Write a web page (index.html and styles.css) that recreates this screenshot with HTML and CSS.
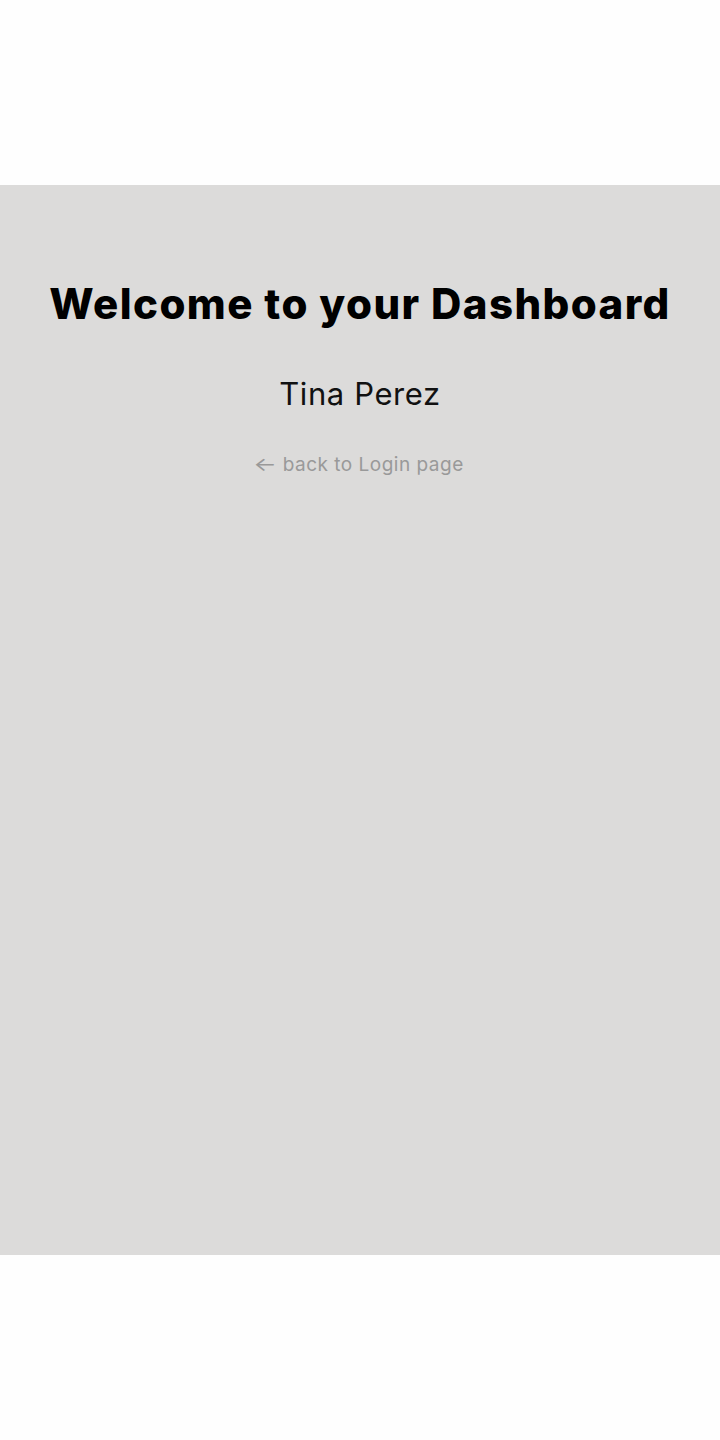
FILE: index.html
```html
<!DOCTYPE html>
<html lang="en">
<head>
<meta charset="utf-8">
<title>Dashboard</title>
<link rel="stylesheet" href="styles.css">
</head>
<body>
<div class="page">
  <main class="dashboard">
    <h1 class="title">Welcome to your Dashboard</h1>
    <p class="user-name">Tina Perez</p>
    <a class="back-link" href="#"><span class="arrow">&larr;</span> back to Login page</a>
  </main>
</div>
</body>
</html>
```
FILE: styles.css
```css
html, body {
  margin: 0;
  padding: 0;
  background: #fefefe;
}
body {
  font-family: "Inter", "Noto Sans", sans-serif;
}
.page {
  padding-top: 185px;
  height: 1440px;
  box-sizing: border-box;
}
.dashboard {
  background: #dcdbda;
  height: 1070px;
  display: flex;
  flex-direction: column;
  align-items: center;
  padding-top: 80px;
  box-sizing: border-box;
}
.title {
  margin: 0;
  font-size: 42px;
  font-weight: 800;
  color: #000;
  line-height: 78px;
  letter-spacing: 1.4px;
}
.user-name {
  margin: 31px 0 0;
  font-size: 31px;
  color: #111;
  line-height: 40px;
  letter-spacing: 0.6px;
}
.back-link {
  margin-top: 39px;
  font-size: 19px;
  color: #999;
  text-decoration: none;
  line-height: 24px;
  letter-spacing: 0.5px;
}
.arrow {
  display: inline-block;
  transform: scaleX(1.3);
  margin-right: 2px;
}
```
